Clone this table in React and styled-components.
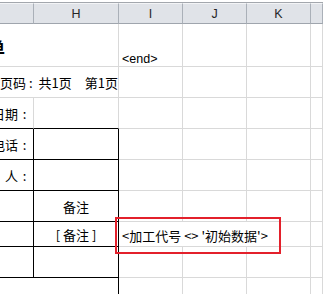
import React from 'react';
import styled, { createGlobalStyle } from 'styled-components';

const GlobalStyle = createGlobalStyle`
    html, body {
        margin: 0;
        padding: 0;
        background: #fff;
        overflow: hidden;
    }
    body {
        font-family: "Noto Sans CJK SC", "Liberation Sans", sans-serif;
    }
`;

const GRID = '#d9d9d9';
const INK = '#000';

const Page = styled.div`
    position: relative;
    width: 323px;
    height: 294px;
    overflow: hidden;
    padding-top: 2px;
    box-sizing: border-box;
`;

const Sheet = styled.div`
    display: grid;
    grid-template-columns: 34px 85px 64px 64px 64px 12px;
    grid-template-rows: 21px 43px 31px 31px 31px 31px 31px 25px 31px 31px;
    border-top: 1px solid #a3a7ad;
`;

const Head = styled.div`
    box-sizing: border-box;
    background: #e0e3e8;
    border-top: 1px solid #f3f4f6;
    border-right: 1px solid #aab0b8;
    border-bottom: 1px solid #9fa5ad;
    display: flex;
    align-items: center;
    justify-content: center;
    font-family: "Liberation Sans", Arial, sans-serif;
    font-size: 12.5px;
    color: #262626;
    padding-top: 1px;
`;

const Cell = styled.div`
    box-sizing: border-box;
    grid-column: span ${p => p.$span || 1};
    border-right: 1px solid ${p => p.$r || 'transparent'};
    border-bottom: 1px solid ${p => p.$b || 'transparent'};
    display: flex;
    align-items: ${p => p.$v || 'center'};
    justify-content: ${p => p.$h || 'flex-start'};
    padding: ${p => p.$pad || '0'};
    font-size: 13px;
    color: #000;
    white-space: nowrap;
    overflow: hidden;
`;

/* right-aligned label that is allowed to spill past the cell's left edge */
const Label = styled.span`
    flex-shrink: 0;
    width: calc(100% + 24px);
    margin-left: -24px;
    padding-right: 2px;
    box-sizing: border-box;
    text-align: right;
`;

const Title = styled.span`
    margin-left: -12px;
    padding-top: 4px;
    font-size: 17px;
    font-weight: bold;
`;

const Colon = styled.span`
    display: inline-block;
    width: 13px;
    text-align: center;
`;

const Mark = styled.span`
    font-family: "Liberation Sans", Arial, sans-serif;
    font-size: 12.5px;
`;

const Callout = styled.div`
    position: absolute;
    left: 115px;
    top: 217px;
    width: 166px;
    height: 37px;
    box-sizing: border-box;
    border: 2px solid #e3202b;
    pointer-events: none;
`;

const cols = ['', 'H', 'I', 'J', 'K', ''];

const label = (txt) => <Label>{txt}<Colon>:</Colon></Label>;

const rows = [
    [
        { span: 2, r: GRID, b: GRID, content: <Title>单</Title> },
        { r: GRID, b: GRID, v: 'flex-end', pad: '0 0 0 3px', content: <Mark>&lt;end&gt;</Mark> },
        { r: GRID, b: GRID }, { r: GRID, b: GRID }, { r: GRID, b: GRID },
    ],
    [
        { span: 2, r: GRID, b: GRID, content: <>页码<Colon>:</Colon>&nbsp;共1页　第1页</> },
        { r: GRID, b: GRID }, { r: GRID, b: GRID }, { r: GRID, b: GRID }, { r: GRID, b: GRID },
    ],
    [
        { r: GRID, b: INK, content: label('日期') },
        { r: GRID, b: INK },
        { r: GRID, b: GRID }, { r: GRID, b: GRID }, { r: GRID, b: GRID }, { r: GRID, b: GRID },
    ],
    [
        { r: INK, b: INK, content: label('电话') },
        { r: INK, b: INK },
        { r: GRID, b: GRID }, { r: GRID, b: GRID }, { r: GRID, b: GRID }, { r: GRID, b: GRID },
    ],
    [
        { r: INK, b: INK, content: label('人') },
        { r: INK, b: INK },
        { r: GRID, b: GRID }, { r: GRID, b: GRID }, { r: GRID, b: GRID }, { r: GRID, b: GRID },
    ],
    [
        { r: INK, b: INK },
        { r: INK, b: INK, h: 'center', content: '备注' },
        { r: GRID, b: GRID }, { r: GRID, b: GRID }, { r: GRID, b: GRID }, { r: GRID, b: GRID },
    ],
    [
        { r: INK, b: INK },
        { r: INK, b: INK, h: 'center', content: '[ 备注 ]' },
        { span: 3, r: GRID, b: GRID, v: 'flex-end', pad: '0 0 1px 3px', content: <>&lt;加工代号 &lt;&gt; '初始数据'&gt;</> },
        { r: GRID, b: GRID },
    ],
    [
        { r: INK, b: INK },
        { r: INK, b: INK },
        { r: GRID, b: GRID }, { r: GRID, b: GRID }, { r: GRID, b: GRID }, { r: GRID, b: GRID },
    ],
    [
        { r: 'transparent', b: GRID },
        { r: INK, b: GRID },
        { r: GRID, b: GRID }, { r: GRID, b: GRID }, { r: GRID, b: GRID }, { r: GRID, b: GRID },
    ],
];

export default function App() {
    return (
        <Page>
            <GlobalStyle />
            <Sheet>
                {cols.map((c, i) => <Head key={'h' + i}>{c}</Head>)}
                {rows.map((row, ri) =>
                    row.map((c, ci) => (
                        <Cell
                            key={ri + '-' + ci}
                            $span={c.span}
                            $r={c.r}
                            $b={c.b}
                            $h={c.h}
                            $v={c.v}
                            $pad={c.pad}
                        >
                            {c.content}
                        </Cell>
                    ))
                )}
            </Sheet>
            <Callout />
        </Page>
    );
}
